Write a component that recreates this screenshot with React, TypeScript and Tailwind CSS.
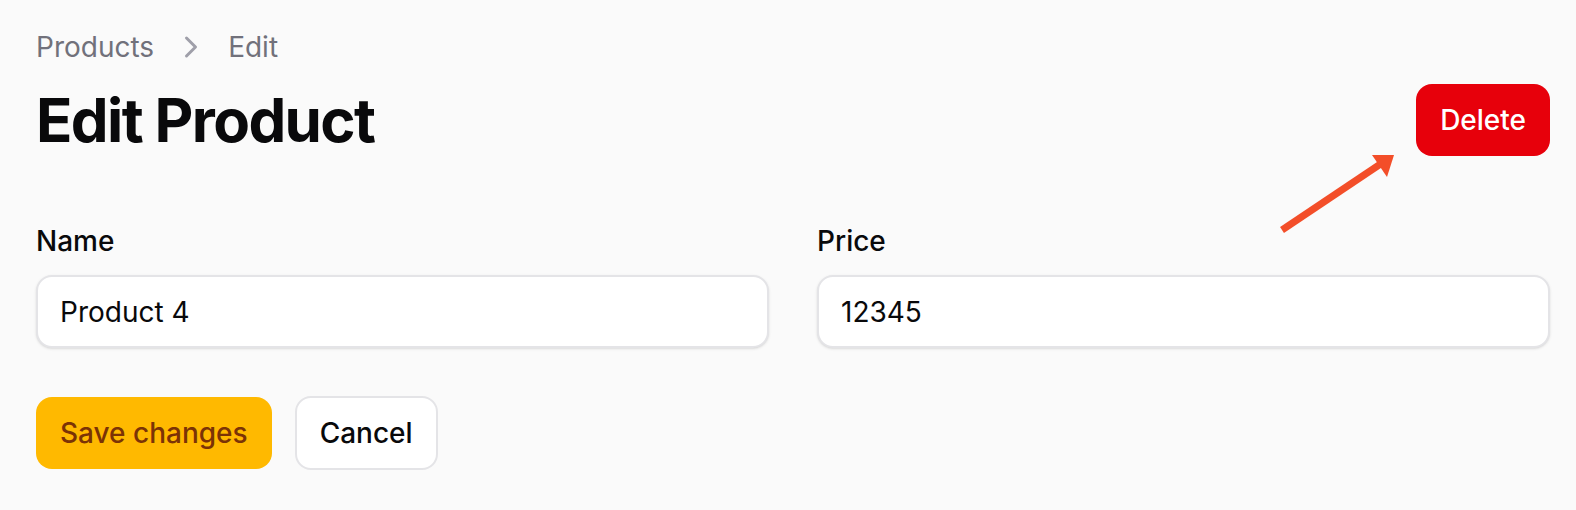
import { ChevronRight } from 'lucide-react';

export default function App() {
  return (
    <div className="relative min-h-screen bg-[#fafafa] pl-[36px] pr-[26px] pt-[27px] font-['Inter',sans-serif] text-zinc-950">
      {/* breadcrumb */}
      <nav className="flex items-center gap-[19px] text-[28px] leading-[40px] text-zinc-500">
        <span>Products</span>
        <ChevronRight size={36} strokeWidth={2} className="text-zinc-400" />
        <span>Edit</span>
      </nav>

      <div className="mt-[17px] flex items-center justify-between">
        <h1 className="text-[60px] font-bold leading-[72px] tracking-[-0.027em]">Edit Product</h1>
        <button className="h-[72px] rounded-[16px] bg-red-600 px-[24px] text-[28px] font-medium text-white">
          Delete
        </button>
      </div>

      <div className="mt-[65px] grid grid-cols-2 gap-[48px]">
        <div>
          <label className="mb-[14px] block text-[28px] font-medium leading-[40px]">Name</label>
          <input
            defaultValue="Product 4"
            className="h-[73px] w-full rounded-[16px] border-2 border-zinc-200 bg-white px-[22px] text-[28px] shadow-sm outline-none"
          />
        </div>
        <div>
          <label className="mb-[14px] block text-[28px] font-medium leading-[40px]">Price</label>
          <input
            defaultValue="12345"
            className="h-[73px] w-full rounded-[16px] border-2 border-zinc-200 bg-white px-[22px] text-[28px] shadow-sm outline-none"
          />
        </div>
      </div>

      <div className="mt-[48px] flex items-center gap-[23px]">
        <button className="h-[72px] rounded-[16px] bg-amber-400 px-[24px] text-[28px] font-medium text-amber-900">
          Save changes
        </button>
        <button className="h-[74px] rounded-[16px] border-2 border-zinc-200 bg-white px-[23px] text-[28px] font-medium">
          Cancel
        </button>
      </div>

      {/* annotation arrow */}
      <svg className="absolute left-0 top-0 pointer-events-none" width="1576" height="510">
        <line x1="1282" y1="230" x2="1382" y2="163" stroke="#f34e29" strokeWidth="7" />
        <polygon points="1394,155 1372,155 1387,177" fill="#f34e29" />
      </svg>
    </div>
  );
}
